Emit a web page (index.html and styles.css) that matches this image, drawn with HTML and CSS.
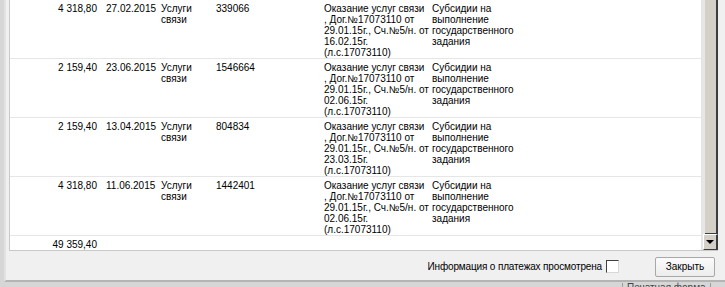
FILE: index.html
```html
<!DOCTYPE html>
<html lang="ru">
<head>
<meta charset="utf-8">
<title>Платежи</title>
<link rel="stylesheet" href="styles.css">
</head>
<body>
<div class="dialog">
  <div class="grid-box">
    <div class="grid-view">
      <table class="grid">
        <colgroup>
          <col class="c-sum"><col class="c-date"><col class="c-type"><col class="c-num"><col class="c-desc"><col class="c-src"><col class="c-rest">
        </colgroup>
        <tbody>
          <tr>
            <td class="sum">4 318,80</td><td>27.02.2015</td><td>Услуги связи</td><td>339066</td>
            <td class="nw">Оказание услуг связи<br>, Дог.№17073110 от<br>29.01.15г., Сч.№5/н. от<br>16.02.15г.<br>(л.с.17073110)</td>
            <td class="nw">Субсидии на<br>выполнение<br>государственного<br>задания</td><td></td>
          </tr>
          <tr>
            <td class="sum">2 159,40</td><td>23.06.2015</td><td>Услуги связи</td><td>1546664</td>
            <td class="nw">Оказание услуг связи<br>, Дог.№17073110 от<br>29.01.15г., Сч.№5/н. от<br>02.06.15г.<br>(л.с.17073110)</td>
            <td class="nw">Субсидии на<br>выполнение<br>государственного<br>задания</td><td></td>
          </tr>
          <tr>
            <td class="sum">2 159,40</td><td>13.04.2015</td><td>Услуги связи</td><td>804834</td>
            <td class="nw">Оказание услуг связи<br>, Дог.№17073110 от<br>29.01.15г., Сч.№5/н. от<br>23.03.15г.<br>(л.с.17073110)</td>
            <td class="nw">Субсидии на<br>выполнение<br>государственного<br>задания</td><td></td>
          </tr>
          <tr>
            <td class="sum">4 318,80</td><td>11.06.2015</td><td>Услуги связи</td><td>1442401</td>
            <td class="nw">Оказание услуг связи<br>, Дог.№17073110 от<br>29.01.15г., Сч.№5/н. от<br>02.06.15г.<br>(л.с.17073110)</td>
            <td class="nw">Субсидии на<br>выполнение<br>государственного<br>задания</td><td></td>
          </tr>
          <tr class="total">
            <td class="sum">49 359,40</td><td></td><td></td><td></td><td></td><td></td><td></td>
          </tr>
        </tbody>
      </table>
    </div>
    <div class="vscroll">
      <div class="thumb"></div>
      <div class="arrow-down"><span class="tri"></span></div>
    </div>
  </div>
  <div class="footer">
    <label class="seen">Информация о платежах просмотрена <span class="check"></span></label>
    <button class="btn" type="button">Закрыть</button>
  </div>
</div>
<div class="behind">
  <span class="print-btn">Печатная форма</span>
</div>
</body>
</html>
```
FILE: styles.css
```css
html, body {
  margin: 0;
  padding: 0;
}
body {
  width: 725px;
  height: 287px;
  overflow: hidden;
  background: #d6d6d6;
  font-family: "Liberation Sans", Arial, sans-serif;
  font-size: 10px;
  color: #000;
}
.dialog {
  margin-left: 4px;
  height: 282px;
  box-sizing: border-box;
  background: #f0f0f0;
  border-left: 2px solid #e2e2e2;
  border-bottom: 2px solid #b4b4b4;
  padding: 0 7px 0 3px;
  display: flex;
  flex-direction: column;
}
.grid-box {
  display: flex;
  height: 251px;
  flex: none;
  box-sizing: border-box;
  border-left: 1px solid #c9c9c9;
  border-bottom: 1px solid #c9c9c9;
  background: #fff;
}
.grid-view {
  flex: 1;
  overflow: hidden;
  border-right: 1px solid #e4e4e4;
}
.grid {
  border-collapse: collapse;
  table-layout: fixed;
  width: 100%;
}
.c-sum { width: 93px; }
.c-date { width: 55px; }
.c-type { width: 55px; }
.c-num { width: 108px; }
.c-desc { width: 108px; }
.c-src { width: 90px; }
.grid td {
  vertical-align: top;
  padding: 3px 3px 0 3px;
  line-height: 11px;
  height: 55px;
  border-bottom: 1px solid #e6e6e6;
  white-space: normal;
  overflow: hidden;
}
.grid td.nw {
  white-space: nowrap;
  overflow: visible;
}
.grid td.sum {
  text-align: right;
  padding-right: 6px;
  white-space: nowrap;
}
.grid tr.total td {
  height: 11px;
  border-bottom: none;
}
.vscroll {
  width: 16px;
  display: flex;
  flex-direction: column;
  background: #e6e6e6;
}
.thumb {
  flex: 1;
  margin-left: 3px;
  background: #d4d0c8;
  border-right: 2px solid #3c3c3c;
  border-bottom: 1px solid #3c3c3c;
}
.arrow-down {
  height: 16px;
  margin-left: 1px;
  box-sizing: border-box;
  background: #d4d0c8;
  border-top: 1px solid #ffffff;
  border-left: 1px solid #ffffff;
  border-right: 2px solid #3c3c3c;
  border-bottom: 1px solid #3c3c3c;
  display: flex;
  align-items: center;
  justify-content: center;
}
.tri {
  width: 0;
  height: 0;
  border-left: 4px solid transparent;
  border-right: 4px solid transparent;
  border-top: 4px solid #000;
}
.footer {
  flex: 1;
  display: flex;
  align-items: center;
  justify-content: flex-end;
  padding-right: 3px;
  padding-top: 2px;
}
.seen {
  display: flex;
  align-items: center;
  gap: 4px;
  margin-right: 36px;
  font-size: 10px;
  letter-spacing: -0.15px;
}
.check {
  width: 13px;
  height: 13px;
  box-sizing: border-box;
  background: #fff;
  border-top: 1px solid #404040;
  border-left: 1px solid #404040;
  border-right: 1px solid #d8d8d8;
  border-bottom: 1px solid #d8d8d8;
}
.btn {
  width: 60px;
  height: 20px;
  padding: 0;
  font-family: "Liberation Sans", Arial, sans-serif;
  font-size: 10px;
  color: #000;
  background: linear-gradient(#fbfbfb, #ececec);
  border: 1px solid #a8a8a8;
  border-radius: 2px;
}
.behind {
  height: 5px;
  overflow: hidden;
  padding-left: 622px;
}
.print-btn {
  display: inline-block;
  padding: 0 4px;
  border: 1px solid #9a9a9a;
  border-top: none;
  color: #444;
  font-size: 10px;
  line-height: 10px;
}
```
